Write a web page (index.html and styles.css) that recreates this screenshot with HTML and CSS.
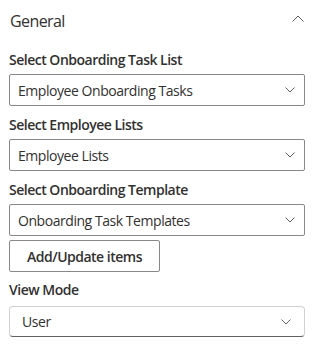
FILE: index.html
```html
<!DOCTYPE html>
<html lang="en">
	<head>
		<meta charset="utf-8">
		<title>Property pane</title>
		<link rel="stylesheet" href="styles.css">
	</head>
	<body>
		<div class="pane">
			<div class="group-header">
				<span class="group-title">General</span>
				<svg class="chevron-up" width="12" height="7" viewBox="0 0 12 7"><path d="M0.5 6.5 L6 1 L11.5 6.5" fill="none" stroke="#605e5c" stroke-width="1"/></svg>
			</div>

			<div class="field">
				<label class="field-label">Select Onboarding Task List</label>
				<div class="dropdown">
					<span class="dropdown-title">Employee Onboarding Tasks</span>
					<svg class="chevron" width="10" height="6" viewBox="0 0 10 6"><path d="M0.5 0.5 L5 5 L9.5 0.5" fill="none" stroke="#605e5c" stroke-width="1"/></svg>
				</div>
			</div>

			<div class="field">
				<label class="field-label">Select Employee Lists</label>
				<div class="dropdown">
					<span class="dropdown-title">Employee Lists</span>
					<svg class="chevron" width="10" height="6" viewBox="0 0 10 6"><path d="M0.5 0.5 L5 5 L9.5 0.5" fill="none" stroke="#605e5c" stroke-width="1"/></svg>
				</div>
			</div>

			<div class="field">
				<label class="field-label">Select Onboarding Template</label>
				<div class="dropdown">
					<span class="dropdown-title">Onboarding Task Templates</span>
					<svg class="chevron" width="10" height="6" viewBox="0 0 10 6"><path d="M0.5 0.5 L5 5 L9.5 0.5" fill="none" stroke="#605e5c" stroke-width="1"/></svg>
				</div>
			</div>

			<button class="button">Add/Update items</button>

			<div class="field">
				<label class="field-label">View Mode</label>
				<div class="dropdown dropdown-v9">
					<span class="dropdown-title">User</span>
					<svg class="chevron" width="10" height="6" viewBox="0 0 10 6"><path d="M0.5 0.5 L5 5 L9.5 0.5" fill="none" stroke="#616161" stroke-width="1"/></svg>
				</div>
			</div>
		</div>
	</body>
</html>
```

FILE: styles.css
```css
body {
	margin: 0;
	background-color: white;
	color: #323130;
	font-family: 'Segoe UI', 'Open Sans', 'Noto Sans', sans-serif;
	font-size: 14px;
	letter-spacing: -0.45px;
}

.pane {
	padding: 0 13px 0 9px;
}

/* Group header */

.group-header {
	display: flex;
	justify-content: space-between;
	align-items: center;
	height: 41px;
	padding-right: 1px;
}

.group-title {
	font-size: 16px;
	line-height: 20px;
	letter-spacing: -0.6px;
	padding-left: 1px;
}

.chevron-up {
	display: block;
	margin-bottom: 4px;
}

/* Fields */

.field {
	margin-top: 3px;
}

.field-label {
	display: block;
	font-weight: 600;
	line-height: 20px;
	padding: 6px 0 4px;
	letter-spacing: -0.5px;
}

.dropdown {
	display: flex;
	align-items: center;
	justify-content: space-between;
	height: 32px;
	box-sizing: border-box;
	border: 1px solid #8a8886;
	border-radius: 2px;
	padding: 0 8px 0 8px;
}

.dropdown-title {
	line-height: 30px;
	padding-top: 1px;
}

.chevron {
	display: block;
	margin-right: 1px;
}

.dropdown-v9 {
	height: 31px;
	border-color: #d1d1d1;
	border-bottom-color: #616161;
	border-radius: 4px;
	padding: 0 12px 0 12px;
}

/* Button */

.button {
	display: block;
	margin-top: 4px;
	height: 32px;
	width: 151px;
	box-sizing: border-box;
	border: 1px solid #8a8886;
	border-radius: 2px;
	background-color: white;
	color: #323130;
	font-family: inherit;
	font-size: 14px;
	font-weight: 600;
	letter-spacing: -0.5px;
	white-space: nowrap;
	padding: 0 8px;
}

.field-label + .dropdown-v9,
.button + .field {
	margin-top: 2px;
}
```
